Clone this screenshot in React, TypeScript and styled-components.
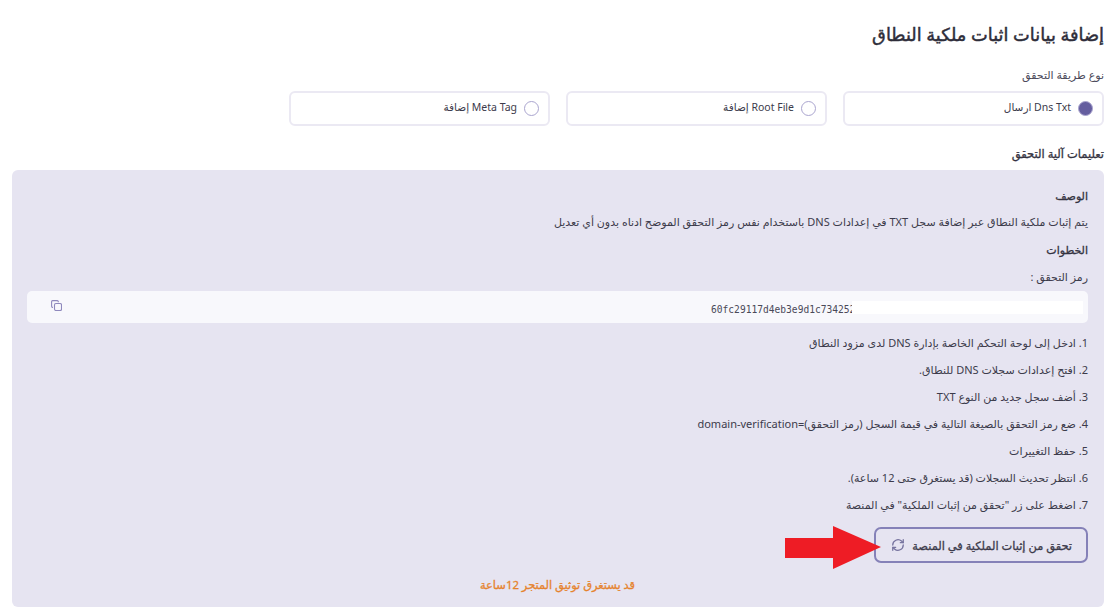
import React from "react";
import styled, { createGlobalStyle } from "styled-components";

const Global = createGlobalStyle`
  html, body { margin: 0; padding: 0; background: #ffffff; }
  body { font-family: "Noto Sans", "DejaVu Sans", sans-serif; color: #3c3b4b; overflow: hidden; }
`;

const Page = styled.main`
  direction: rtl;
  width: 1119px;
  height: 614px;
  box-sizing: border-box;
  padding: 24px 15px 0 12px;
  overflow: hidden;
`;
const Title = styled.h1`
  margin: 0;
  font-size: 17.8px;
  line-height: 21px;
  font-weight: 400;
  -webkit-text-stroke: 0.45px #2e2d3a;
  color: #2e2d3a;
`;
const FieldLabel = styled.div`
  margin-top: 22px;
  font-size: 11px;
  line-height: 16px;
  color: #4b4a5a;
`;
const RadioGrid = styled.div`
  display: grid;
  grid-template-columns: repeat(4, 261px);
  gap: 16px;
  margin-top: 8px;
`;
const RadioCard = styled.label`
  height: 35px;
  box-sizing: border-box;
  border: 2px solid #ebe9f3;
  border-radius: 6px;
  display: flex;
  align-items: center;
  gap: 7px;
  padding: 0 9px 0 0;
  font-size: 10.5px;
  color: #3c3b4b;
`;
const RadioDot = styled.span<{ $on?: boolean }>`
  width: 15px;
  height: 15px;
  margin-bottom: 1px;
  box-sizing: border-box;
  border-radius: 50%;
  border: 1.5px solid #aaa5cf;
  background: ${(p) => (p.$on ? "#655e9f" : "#ffffff")};
`;
const RadioText = styled.span`
  margin-bottom: 4px;
`;
const SectionTitle = styled.h2`
  margin: 20px 0 0 0;
  font-size: 11.5px;
  line-height: 16px;
  font-weight: 400;
  -webkit-text-stroke: 0.3px #33323f;
  color: #33323f;
`;
const Panel = styled.section`
  margin-top: 8px;
  height: 437px;
  box-sizing: border-box;
  background: #e6e4f1;
  border-radius: 6px;
  padding: 18px 16px 0 15px;
  display: flex;
  flex-direction: column;
`;
const PanelHeading = styled.h3<{ $top?: number }>`
  margin: ${(p) => p.$top ?? 0}px 0 0 0;
  font-size: 11px;
  line-height: 16px;
  font-weight: 400;
  -webkit-text-stroke: 0.3px #33323f;
  color: #33323f;
`;
const PanelText = styled.p<{ $top?: number }>`
  margin: ${(p) => p.$top ?? 0}px 0 0 0;
  font-size: 11px;
  line-height: 16px;
  color: #3c3b4b;
`;
const CodeField = styled.div`
  direction: ltr;
  margin-top: 6px;
  height: 32px;
  box-sizing: border-box;
  border-radius: 5px;
  background: #f8f8fc;
  display: flex;
  align-items: center;
  padding: 0 5px 0 24px;
`;
const CopyButton = styled.span`
  display: flex;
  margin-bottom: 4px;
  color: #8f89bd;
`;
const CodeValue = styled.code`
  margin-left: auto;
  margin-top: 4px;
  font-family: "DejaVu Sans Mono", monospace;
  font-size: 9.6px;
  color: #4a4958;
  width: 141px;
  overflow: hidden;
  white-space: nowrap;
`;
const CodeMask = styled.span`
  width: 231px;
  height: 13px;
  background: #ffffff;
`;
const Steps = styled.ol`
  list-style: none;
  margin: 12px 0 0 0;
  padding: 0;
  display: flex;
  flex-direction: column;
  gap: 11px;
`;
const Step = styled.li`
  font-size: 11px;
  line-height: 16px;
  color: #3c3b4b;
`;
const ActionRow = styled.div`
  margin-top: 14px;
  display: flex;
`;
const VerifyButton = styled.button`
  position: relative;
  width: 214px;
  height: 36px;
  box-sizing: border-box;
  border: 2px solid #8581b8;
  border-radius: 7px;
  background: transparent;
  display: flex;
  align-items: center;
  gap: 7px;
  padding: 0 14px;
  white-space: nowrap;
  font-family: inherit;
  font-size: 11.4px;
  font-weight: 400;
  -webkit-text-stroke: 0.3px #3c3b4b;
  color: #3c3b4b;
`;
const RefreshIcon = styled.span`
  display: flex;
  color: #77749f;
  -webkit-text-stroke: 0;
`;
const Arrow = styled.svg`
  position: absolute;
  left: -91px;
  top: -3px;
`;
const Note = styled.div`
  margin-top: 14px;
  text-align: center;
  font-size: 11.4px;
  line-height: 16px;
  font-weight: 400;
  -webkit-text-stroke: 0.3px #e5832e;
  color: #e5832e;
`;

const steps = [
  "1. ادخل إلى لوحة التحكم الخاصة بإدارة DNS لدى مزود النطاق",
  "2. افتح إعدادات سجلات DNS للنطاق.",
  "3. أضف سجل جديد من النوع TXT",
  "4. ضع رمز التحقق بالصيغة التالية في قيمة السجل (رمز التحقق)=domain-verification",
  "5. حفظ التغييرات",
  "6. انتظر تحديث السجلات (قد يستغرق حتى 12 ساعة).",
  '7. اضغط على زر "تحقق من إثبات الملكية" في المنصة',
];

export default function App() {
  return (
    <Page>
      <Global />
      <Title>إضافة بيانات اثبات ملكية النطاق</Title>
      <FieldLabel>نوع طريقة التحقق</FieldLabel>
      <RadioGrid>
        <RadioCard><RadioDot $on /><RadioText>Dns Txt ارسال</RadioText></RadioCard>
        <RadioCard><RadioDot /><RadioText>Root File إضافة</RadioText></RadioCard>
        <RadioCard><RadioDot /><RadioText>Meta Tag إضافة</RadioText></RadioCard>
      </RadioGrid>
      <SectionTitle>تعليمات آلية التحقق</SectionTitle>
      <Panel>
        <PanelHeading>الوصف</PanelHeading>
        <PanelText $top={10}>
          يتم إثبات ملكية النطاق عبر إضافة سجل TXT في إعدادات DNS باستخدام نفس رمز التحقق الموضح ادناه بدون أي تعديل
        </PanelText>
        <PanelHeading $top={12}>الخطوات</PanelHeading>
        <PanelText $top={11}>رمز التحقق :</PanelText>
        <CodeField>
          <CopyButton>
            <svg width="11" height="11" viewBox="0 0 11 11" fill="none" stroke="currentColor" strokeWidth="1.1">
              <rect x="3.5" y="3.5" width="7" height="7" rx="1.4" />
              <path d="M2 7.4H1.6A1.1 1.1 0 0 1 .6 6.3V1.7A1.1 1.1 0 0 1 1.6.6h4.6a1.1 1.1 0 0 1 1.1 1v.6" />
            </svg>
          </CopyButton>
          <CodeValue>60fc29117d4eb3e9d1c734252</CodeValue>
          <CodeMask />
        </CodeField>
        <Steps>
          {steps.map((s) => (
            <Step key={s}>{s}</Step>
          ))}
        </Steps>
        <ActionRow>
          <VerifyButton>
            تحقق من إثبات الملكية في المنصة
            <RefreshIcon>
              <svg width="14" height="14" viewBox="0 0 24 24" fill="none" stroke="currentColor" strokeWidth="2.2" strokeLinecap="round" strokeLinejoin="round">
                <path d="M3 12a9 9 0 0 1 15-6.7L21 8" />
                <path d="M21 3v5h-5" />
                <path d="M21 12a9 9 0 0 1-15 6.7L3 16" />
                <path d="M8 16H3v5" />
              </svg>
            </RefreshIcon>
            <Arrow width="96" height="43" viewBox="0 0 96 43">
              <polygon points="0,12 48,12 48,0 96,21 48,43 48,32 0,32" fill="#ee1c25" />
            </Arrow>
          </VerifyButton>
        </ActionRow>
        <Note>قد يستغرق توثيق المتجر 12ساعة</Note>
      </Panel>
    </Page>
  );
}
